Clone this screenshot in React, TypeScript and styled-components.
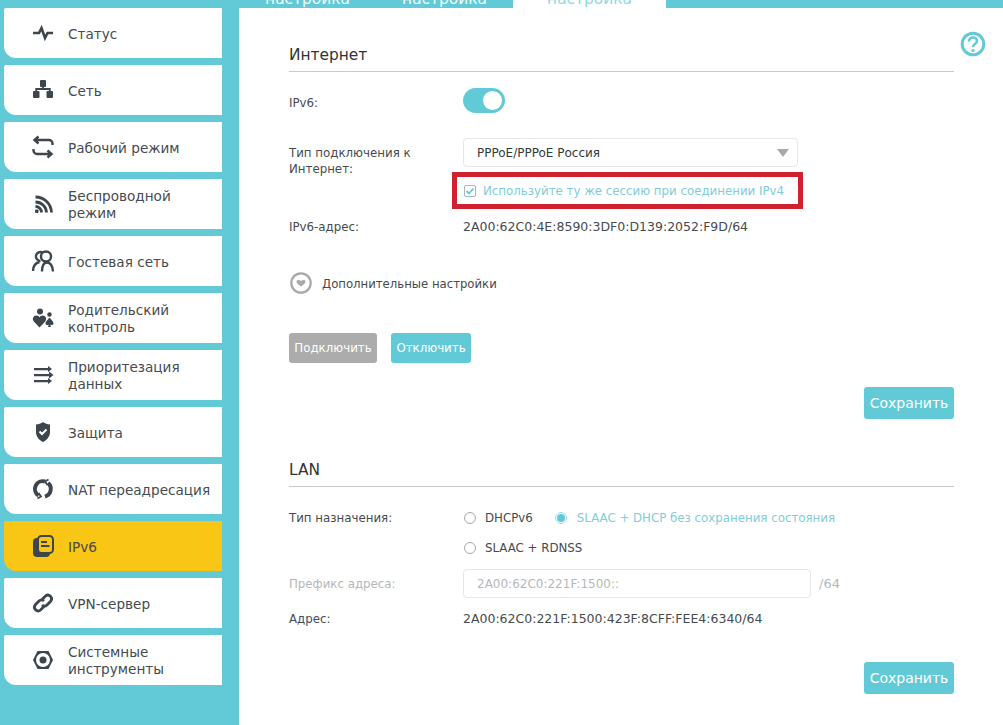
import React from "react";
import styled, { createGlobalStyle } from "styled-components";

const TEAL = "#62cad6";
const INK = "#454b50";
const SOFT = "#7fcdd8";
const MUTED = "#b5b8ba";

const Global = createGlobalStyle`
  html, body { margin: 0; padding: 0; background: #fff; }
  body { font-family: "DejaVu Sans", Verdana, sans-serif; color: ${INK}; }
  *, *::before, *::after { box-sizing: border-box; }
`;

const Page = styled.div`
  display: flex;
  width: 1003px;
  height: 725px;
  overflow: hidden;
  background: #fff;
`;

const Sidebar = styled.nav`
  width: 239px;
  flex: none;
  background: ${TEAL};
  padding: 8px 17px 0 4px;
  display: flex;
  flex-direction: column;
  gap: 7px;
`;

const NavItem = styled.a<{ $active?: boolean }>`
  height: 50px;
  flex: none;
  display: flex;
  align-items: center;
  gap: 13px;
  padding-left: 27px;
  padding-top: 2px;
  background: ${(p) => (p.$active ? "#f9c615" : "#fff")};
  border-radius: 2px 0 0 12px;
  font-size: 13.6px;
  line-height: 17px;
  color: ${INK};
`;

const NavIcon = styled.svg`
  width: 24px;
  height: 24px;
  flex: none;
  margin-top: -2px;
  color: #3d464d;
`;

const Main = styled.main`
  flex: 1;
  min-width: 0;
  display: flex;
  flex-direction: column;
  position: relative;
`;

const Tabs = styled.div`
  height: 8px;
  flex: none;
  background: ${TEAL};
  display: flex;
  overflow: hidden;
`;

const Tab = styled.div<{ $active?: boolean; $w: number }>`
  width: ${(p) => p.$w}px;
  height: 8px;
  display: flex;
  justify-content: center;
  align-items: flex-end;
  background: ${(p) => (p.$active ? "#fff" : "transparent")};
  color: ${(p) => (p.$active ? "#8fd9e1" : "#f2fbfc")};
  font-size: 15.4px;
  line-height: 17px;
`;

const Content = styled.div`
  padding: 34px 49px 0 50px;
  display: flex;
  flex-direction: column;
  font-size: 11.8px;
  line-height: 16px;
`;

const Title = styled.h2<{ $top?: number }>`
  margin: ${(p) => p.$top ?? 0}px 0 0;
  height: 30px;
  padding-top: 3px;
  font-weight: 400;
  font-size: 15.4px;
  line-height: 20px;
  color: #2f3438;
  border-bottom: 1px solid #c9c9c9;
`;

const Row = styled.div<{ $top: number }>`
  display: flex;
  align-items: center;
  margin-top: ${(p) => p.$top}px;
`;

const TallRow = styled(Row)`
  align-items: flex-start;
`;

const Label = styled.div<{ $muted?: boolean; $pad?: number }>`
  width: 174px;
  flex: none;
  padding-top: ${(p) => p.$pad ?? 0}px;
  color: ${(p) => (p.$muted ? MUTED : INK)};
`;

const Value = styled.div`
  color: ${INK};
  font-size: 12.5px;
`;

const Toggle = styled.div`
  width: 42px;
  height: 25px;
  border-radius: 13px;
  background: ${TEAL};
  display: flex;
  align-items: center;
  justify-content: flex-end;
  padding-right: 3px;
`;

const Knob = styled.span`
  width: 19px;
  height: 19px;
  border-radius: 50%;
  background: #fff;
`;

const Select = styled.div`
  width: 335px;
  height: 29px;
  border: 1px solid #e6e6e6;
  border-radius: 4px;
  display: flex;
  align-items: center;
  justify-content: space-between;
  padding: 0 8px 0 13px;
  font-size: 12px;
  color: #34393d;
`;

const Caret = styled.span`
  width: 0;
  height: 0;
  border-left: 6px solid transparent;
  border-right: 6px solid transparent;
  border-top: 8px solid #a9a9a9;
`;

const CheckRow = styled.div`
  position: relative;
  display: flex;
  align-items: center;
  gap: 7px;
  padding-left: 1px;
  color: ${SOFT};
  &::after {
    content: "";
    position: absolute;
    left: -11px;
    top: -11px;
    width: 351px;
    height: 37px;
    border: 5px solid #d0212e;
  }
`;

const CheckBox = styled.span`
  width: 12px;
  height: 12px;
  border: 1px solid #aab4b8;
  border-radius: 2px;
  display: flex;
  align-items: center;
  justify-content: center;
`;

const Advanced = styled.div`
  display: flex;
  align-items: center;
  gap: 10px;
  margin-left: 1px;
  font-size: 11.7px;
  color: ${INK};
`;

const AdvancedText = styled.span`
  padding-top: 2px;
`;

const Buttons = styled.div`
  display: flex;
  gap: 14px;
  margin-top: 39px;
`;

const Btn = styled.div<{ $bg: string; $w: number }>`
  width: ${(p) => p.$w}px;
  height: 30px;
  border-radius: 3px;
  background: ${(p) => p.$bg};
  color: #fff;
  font-size: 11.8px;
  display: flex;
  align-items: center;
  justify-content: center;
`;

const SaveRow = styled.div<{ $top: number }>`
  display: flex;
  justify-content: flex-end;
  margin-top: ${(p) => p.$top}px;
`;

const Save = styled.div`
  width: 90px;
  height: 32px;
  border-radius: 3px;
  background: ${TEAL};
  color: #fff;
  font-size: 14px;
  display: flex;
  align-items: center;
  justify-content: center;
`;

const Radio = styled.label<{ $on?: boolean }>`
  display: flex;
  align-items: center;
  gap: ${(p) => (p.$on ? 10 : 9)}px;
  padding-left: 1px;
  margin-right: 21px;
  color: ${(p) => (p.$on ? SOFT : INK)};
`;

const Dot = styled.span<{ $on?: boolean }>`
  width: 12px;
  height: 12px;
  flex: none;
  border-radius: 50%;
  border: 1px solid ${(p) => (p.$on ? "#9fdbe3" : "#a9a9a9")};
  display: flex;
  align-items: center;
  justify-content: center;
  &::after {
    content: "";
    width: 8px;
    height: 8px;
    border-radius: 50%;
    background: ${(p) => (p.$on ? TEAL : "transparent")};
  }
`;

const Input = styled.div`
  width: 348px;
  height: 29px;
  border: 1px solid #e6e6e6;
  border-radius: 4px;
  display: flex;
  align-items: center;
  padding-left: 13px;
  font-size: 12px;
  color: ${MUTED};
`;

const Suffix = styled.span`
  margin-left: 8px;
  font-size: 13px;
  color: ${MUTED};
`;

const Help = styled.svg`
  position: absolute;
  left: 721px;
  top: 31px;
  width: 26px;
  height: 26px;
  color: ${TEAL};
`;

const items: { label: React.ReactNode; icon: React.ReactNode; active?: boolean }[] = [
  {
    label: "Статус",
    icon: <path d="M2 12h6l2.500-5 3.500 10 2.500-5h5.500" fill="none" stroke="currentColor" strokeWidth="2.600" />,
  },
  {
    label: "Сеть",
    icon: (
      <>
        <rect x="9" y="2" width="6" height="7" rx="1" fill="currentColor" />
        <rect x="2" y="13" width="6.500" height="7" rx="1" fill="currentColor" />
        <rect x="15.500" y="13" width="6.500" height="7" rx="1" fill="currentColor" />
        <path d="M12 8v3M5.200 14v-3h13.600v3" fill="none" stroke="currentColor" strokeWidth="1.800" />
      </>
    ),
  },
  {
    label: "Рабочий режим",
    icon: (
      <path
        d="M5 5h13a3.500 3.500 0 0 1 3.500 3.500V10M7.500 1.500 3.500 5l4 3.500M19 19H6a3.500 3.500 0 0 1-3.500-3.500V14M16.500 15.500l4 3.500-4 3.500"
        fill="none"
        stroke="currentColor"
        strokeWidth="2.400"
      />
    ),
  },
  {
    label: (
      <>
        Беспроводной
        <br />
        режим
      </>
    ),
    icon: (
      <>
        <path
          d="M4.500 5a16 16 0 0 1 16 15.500M4.500 10a11 11 0 0 1 11 10.500M4.500 14.500a6 6 0 0 1 6 6"
          fill="none"
          stroke="currentColor"
          strokeWidth="2.800"
        />
        <rect x="4" y="17.500" width="3.500" height="3.500" rx="1" fill="currentColor" />
      </>
    ),
  },
  {
    label: "Гостевая сеть",
    icon: (
      <g fill="none" stroke="currentColor" strokeWidth="2.400">
        <path d="M9.500 12a4.500 4.500 0 1 1 2-8.500" />
        <circle cx="15" cy="7.500" r="5" />
        <path d="M2 22c0-5 2.500-8 6.500-9M11 22.500c0-5.500 1.500-9 5-9s5.500 3.500 6 9" />
      </g>
    ),
  },
  {
    label: (
      <>
        Родительский
        <br />
        контроль
      </>
    ),
    icon: (
      <g fill="currentColor">
        <circle cx="9" cy="5.500" r="3" />
        <path d="M8.500 21.500 2.800 15.500c-2-2.500-.5-6 2.500-6 1.500 0 2.500.7 3.200 1.800.7-1.100 1.700-1.800 3.200-1.800 3 0 4.500 3.500 2.500 6z" />
        <circle cx="18.500" cy="8.500" r="2.200" />
        <path d="M18.500 11.500c1 1.500 4 3.500 4 6 0 1.500-2 2-3.300 1l.8 2.500h-3l.8-2.500c-1.300 1-3.300.5-3.300-1 0-2.500 3-4.500 4-6z" />
      </g>
    ),
  },
  {
    label: (
      <>
        Приоритезация
        <br />
        данных
      </>
    ),
    icon: (
      <g fill="currentColor">
        <path d="M3 5h14V3l4 3-4 3V7.300H3zM3 11h15V8.500l4.500 3.500-4.500 3.500V13.300H3zM3 17h14v-2l4 3-4 3v-1.700H3z" />
      </g>
    ),
  },
  {
    label: "Защита",
    icon: (
      <>
        <path d="M12 2c2 1.500 4.500 2.300 7 2.500V12c0 4.500-3 8-7 10-4-2-7-5.500-7-10V4.500C7.500 4.300 10 3.500 12 2z" fill="currentColor" />
        <path d="M8.500 11.500 11 14l4.500-4.500" fill="none" stroke="#fff" strokeWidth="2" />
      </>
    ),
  },
  {
    label: "NAT переадресация",
    icon: (
      <g fill="none" stroke="currentColor" strokeWidth="4">
        <path d="M7.500 18.500A7.800 7.800 0 0 1 14 4.500" />
        <path d="M17 6a7.800 7.800 0 0 1-3 13.500" />
        <path d="M17.500 2.500 14 4.500l2.500 3.500" strokeWidth="1.800" />
        <path d="M6.500 21.500 10 19.500 7.500 16" strokeWidth="1.800" />
      </g>
    ),
  },
  {
    label: "IPv6",
    active: true,
    icon: (
      <>
        <rect x="2" y="4" width="17" height="19" rx="4" fill="currentColor" />
        <rect x="7" y="2" width="15" height="17" rx="3.500" fill="#f9c615" stroke="currentColor" strokeWidth="2" />
        <path d="M10 8h6M10 12h8.500" stroke="currentColor" strokeWidth="2" />
      </>
    ),
  },
  {
    label: "VPN-сервер",
    icon: (
      <g fill="none" stroke="currentColor" strokeWidth="2.800">
        <path d="M11 8.500 14.500 5a3.700 3.700 0 0 1 5.200 5.200L16 14a3.700 3.700 0 0 1-5 0" />
        <path d="M13 15.500 9.500 19a3.700 3.700 0 0 1-5.200-5.200L8 10a3.700 3.700 0 0 1 5 0" />
      </g>
    ),
  },
  {
    label: (
      <>
        Системные
        <br />
        инструменты
      </>
    ),
    icon: (
      <>
        <path d="M6.500 3h11L22 12l-4.500 9h-11L2 12z" fill="currentColor" />
        <circle cx="12" cy="12" r="7" fill="#fff" />
        <circle cx="12" cy="12" r="3.500" fill="currentColor" />
      </>
    ),
  },
];

export default function App() {
  return (
    <Page>
      <Global />
      <Sidebar>
        {items.map((it, i) => (
          <NavItem key={i} $active={it.active}>
            <NavIcon viewBox="0 0 24 24">{it.icon}</NavIcon>
            <span>{it.label}</span>
          </NavItem>
        ))}
      </Sidebar>
      <Main>
        <Tabs>
          <Tab $w={137}>настройка</Tab>
          <Tab $w={137}>настройка</Tab>
          <Tab $w={153} $active>
            настройка
          </Tab>
        </Tabs>
        <Content>
          <Title>Интернет</Title>
          <Row $top={16}>
            <Label $pad={5}>IPv6:</Label>
            <Toggle>
              <Knob />
            </Toggle>
          </Row>
          <TallRow $top={25}>
            <Label $pad={7}>
              Тип подключения к
              <br />
              Интернет:
            </Label>
            <Select>
              PPPoE/PPPoE Россия
              <Caret />
            </Select>
          </TallRow>
          <Row $top={6}>
            <Label />
            <CheckRow>
              <CheckBox>
                <svg width="10" height="10" viewBox="0 0 10 10">
                  <path d="M1.500 5 4 7.500 8.500 2.500" fill="none" stroke={TEAL} strokeWidth="1.800" />
                </svg>
              </CheckBox>
              Используйте ту же сессию при соединении IPv4
            </CheckRow>
          </Row>
          <Row $top={20}>
            <Label>IPv6-адрес:</Label>
            <Value>2A00:62C0:4E:8590:3DF0:D139:2052:F9D/64</Value>
          </Row>
          <Row $top={37}>
            <Advanced>
              <svg width="22" height="22" viewBox="0 0 22 22">
                <circle cx="11" cy="11" r="9.700" fill="none" stroke="#a9a9a9" strokeWidth="2.200" />
                <path d="M6.500 9.500c0-1.500 2.500-2.300 4.500-.5 2-1.800 4.500-1 4.500.5 0 2-2.500 3.500-4.500 5-2-1.500-4.500-3-4.500-5z" fill="#a9a9a9" />
              </svg>
              <AdvancedText>Дополнительные настройки</AdvancedText>
            </Advanced>
          </Row>
          <Buttons>
            <Btn $bg="#acacac" $w={88}>
              Подключить
            </Btn>
            <Btn $bg={TEAL} $w={80}>
              Отключить
            </Btn>
          </Buttons>
          <SaveRow $top={24}>
            <Save>Сохранить</Save>
          </SaveRow>

          <Title $top={38}>LAN</Title>
          <Row $top={23}>
            <Label>Тип назначения:</Label>
            <Radio>
              <Dot />
              DHCPv6
            </Radio>
            <Radio $on>
              <Dot $on />
              SLAAC + DHCP без сохранения состояния
            </Radio>
          </Row>
          <Row $top={14}>
            <Label />
            <Radio>
              <Dot />
              SLAAC + RDNSS
            </Radio>
          </Row>
          <Row $top={13}>
            <Label $muted>Префикс адреса:</Label>
            <Input>2A00:62C0:221F:1500::</Input>
            <Suffix>/64</Suffix>
          </Row>
          <Row $top={13}>
            <Label>Адрес:</Label>
            <Value>2A00:62C0:221F:1500:423F:8CFF:FEE4:6340/64</Value>
          </Row>
          <SaveRow $top={35}>
            <Save>Сохранить</Save>
          </SaveRow>
        </Content>
        <Help viewBox="0 0 26 26">
          <circle cx="13" cy="13" r="10.800" fill="none" stroke="currentColor" strokeWidth="3" />
          <path d="M9 10.500c0-2.500 1.800-4 4-4s4 1.500 4 3.500c0 3-4 3-4 6" fill="none" stroke="currentColor" strokeWidth="2.600" />
          <circle cx="13" cy="19.500" r="1.600" fill="currentColor" />
        </Help>
      </Main>
    </Page>
  );
}
